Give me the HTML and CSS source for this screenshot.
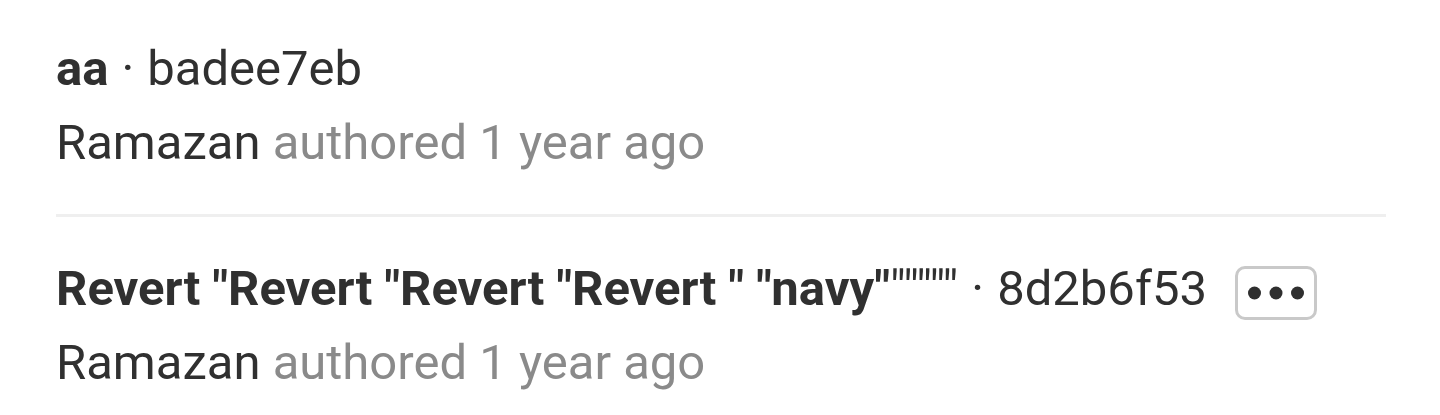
FILE: index.html
```html
<!DOCTYPE html>
<html lang="en">
<head>
<meta charset="utf-8">
<title>Commits</title>
<link rel="stylesheet" href="styles.css">
</head>
<body>
<ul class="commit-list">
  <li class="commit">
    <div class="commit-title">
      <span class="msg">aa</span><span class="sep">·</span><span class="sha">badee7eb</span>
    </div>
    <div class="commit-meta">
      <span class="author">Ramazan</span> <span class="muted">authored 1 year ago</span>
    </div>
  </li>
  <li class="commit">
    <div class="commit-title">
      <span class="msg">Revert "Revert "Revert "Revert " "navy"<span class="quotes">"""""</span></span><span class="sep">·</span><span class="sha">8d2b6f53</span>
      <button class="more" type="button" aria-label="Toggle commit description">
        <svg width="56" height="14" viewBox="0 0 56 14"><circle cx="6.5" cy="7" r="6.5"/><circle cx="28" cy="7" r="6.5"/><circle cx="49.5" cy="7" r="6.5"/></svg>
      </button>
    </div>
    <div class="commit-meta">
      <span class="author">Ramazan</span> <span class="muted">authored 1 year ago</span>
    </div>
  </li>
</ul>
</body>
</html>
```

FILE: styles.css
```css
html, body {
  margin: 0;
  padding: 0;
  background: #fff;
}
body {
  font-family: Roboto, "Liberation Sans", sans-serif;
  color: #303030;
  font-size: 49px;
}
.commit-list {
  list-style: none;
  margin: 0;
  padding: 38px 54px 0 56px;
}
.commit {
  display: flex;
  flex-direction: column;
  gap: 12px;
  padding: 0 0 40px;
}
.commit + .commit {
  border-top: 3px solid #efefef;
  padding-top: 41px;
}
.commit-title {
  display: flex;
  align-items: center;
  height: 62px;
  line-height: 62px;
  white-space: nowrap;
}
.msg {
  font-weight: 700;
}
.quotes {
  font-weight: 400;
}
.sep {
  margin: 0 13px;
}
.sha {
  font-weight: 400;
}
.more {
  margin: 8px 0 0 28px;
  width: 82px;
  height: 54px;
  border: 3px solid #c9c9c9;
  border-radius: 10px;
  background: #fff;
  padding: 0;
  display: flex;
  align-items: center;
  justify-content: center;
  fill: #2f2f2f;
}
.commit-meta {
  line-height: 62px;
  height: 62px;
}
.muted {
  color: #8a8a8a;
}
```
